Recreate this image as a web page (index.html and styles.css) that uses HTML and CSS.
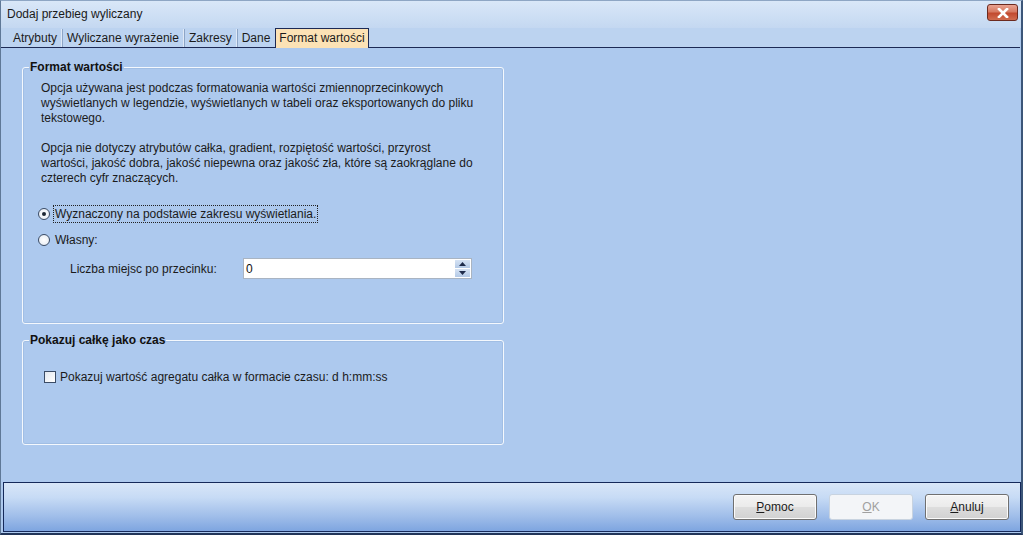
FILE: index.html
```html
<!DOCTYPE html>
<html lang="pl">
<head>
<meta charset="utf-8">
<title>Dodaj przebieg wyliczany</title>
<link rel="stylesheet" href="styles.css">
</head>
<body>
<div class="window">
  <div class="titlebar">
    <span class="title">Dodaj przebieg wyliczany</span>
    <button class="close" aria-label="Zamknij">
      <svg width="14" height="10" viewBox="0 0 14 10"><path d="M3 1 L11 9 M11 1 L3 9" stroke="#fff" stroke-width="2.6" stroke-linecap="square"/></svg>
    </button>
  </div>
  <div class="tabs">
    <span class="tab">Atrybuty</span>
    <span class="tab">Wyliczane wyrażenie</span>
    <span class="tab">Zakresy</span>
    <span class="tab">Dane</span>
    <span class="tab active">Format wartości</span>
  </div>
  <div class="content">
    <fieldset class="group g1">
      <legend>Format wartości</legend>
      <p class="desc">Opcja używana jest podczas formatowania wartości zmiennoprzecinkowych<br>wyświetlanych w legendzie, wyświetlanych w tabeli oraz eksportowanych do pliku<br>tekstowego.</p>
      <p class="desc">Opcja nie dotyczy atrybutów całka, gradient, rozpiętość wartości, przyrost<br>wartości, jakość dobra, jakość niepewna oraz jakość zła, które są zaokrąglane do<br>czterech cyfr znaczących.</p>
      <div class="radio-row r1"><span class="radio checked"></span><span class="label focus">Wyznaczony na podstawie zakresu wyświetlania.</span></div>
      <div class="radio-row r2"><span class="radio"></span><span class="label">Własny:</span></div>
      <div class="field-row">
        <span class="field-label">Liczba miejsc po przecinku:</span>
        <div class="spin">
          <span class="spin-value">0</span>
          <div class="spin-btns">
            <span class="sb"><svg width="7" height="4" viewBox="0 0 7 4"><path d="M0 4 L3.5 0 L7 4 Z" fill="#1e2b4a"/></svg></span>
            <span class="sb"><svg width="7" height="4" viewBox="0 0 7 4"><path d="M0 0 L3.5 4 L7 0 Z" fill="#1e2b4a"/></svg></span>
          </div>
        </div>
      </div>
    </fieldset>
    <fieldset class="group g2">
      <legend>Pokazuj całkę jako czas</legend>
      <div class="check-row"><span class="checkbox"></span><span class="label">Pokazuj wartość agregatu całka w formacie czasu: d h:mm:ss</span></div>
    </fieldset>
  </div>
  <div class="footer">
    <button class="btn"><u>P</u>omoc</button>
    <button class="btn disabled"><u>O</u>K</button>
    <button class="btn"><u>A</u>nuluj</button>
  </div>
</div>
</body>
</html>
```

FILE: styles.css
```css
* { box-sizing: border-box; }
html, body { margin: 0; padding: 0; }
body {
  width: 1023px;
  height: 535px;
  overflow: hidden;
  font-family: "Liberation Sans", Arial, sans-serif;
  font-size: 12px;
  color: #1b1b1b;
  background: #adc9ee;
}
.window {
  width: 1023px;
  height: 535px;
  display: flex;
  flex-direction: column;
  background: #adc9ee;
  border-left: 1px solid #5f7897;
  border-right: 2px solid #3c5679;
  border-bottom: 2px solid #22365a;
  border-top: 1px solid #8ea6c4;
}
.titlebar {
  height: 27px;
  flex: none;
  display: flex;
  align-items: center;
  justify-content: space-between;
  padding: 0 3px 0 6px;
  background: linear-gradient(#d9e7f8, #c4d8f1);
}
.title { font-size: 12px; color: #1a1a1a; margin-top: -1px; }
.close {
  width: 31px;
  height: 17px;
  margin-top: -4px;
  border: 1px solid #6c2a1f;
  border-radius: 3px;
  background: linear-gradient(#e9a392 0%, #d67a62 45%, #c24a2f 55%, #d06c4f 100%);
  display: flex;
  align-items: center;
  justify-content: center;
  padding: 0;
}
.tabs {
  height: 20px;
  flex: none;
  display: flex;
  align-items: flex-end;
  padding-left: 8px;
  background: #bcd3f0;
  border-bottom: 1px solid #1d2a55;
  margin-right: 1px;
}
.tab {
  height: 18px;
  line-height: 18px;
  padding: 0 4px 0 4px;
  color: #1b1b1b;
  border-right: 1px solid #dfe9f7;
  box-shadow: 1px 0 0 #8da5c6;
  margin-right: 1px;
}
.tab:nth-child(4) { border-right: none; box-shadow: none; }
.tab.active {
  height: 20px;
  line-height: 19px;
  background: #fce2b5;
  border: 1px solid #1d2a55;
  border-bottom: none;
  box-shadow: none;
  margin-bottom: -1px;
  padding: 0 3px;
  position: relative;
}
.content {
  flex: 1;
  padding: 13px 0 0 21px;
  display: flex;
  flex-direction: column;
}
.group {
  width: 482px;
  margin: 0;
  border: 1px solid #f4f8fd;
  border-radius: 3px;
  box-shadow: inset 0 0 0 1px rgba(140,170,210,0.35);
  padding: 0 0 0 18px;
  flex: none;
}
.group legend {
  font-weight: bold;
  font-size: 12px;
  color: #111;
  padding: 0 1px;
  margin-left: -12px;
  line-height: 13px;
}
.g1 { height: 263px; }
.g2 { height: 111px; margin-top: 10px; }
.desc {
  margin: 7px 0 0 0;
  line-height: 15px;
  color: #1b1b1b;
}
.desc + .desc { margin-top: 15px; }
.radio-row {
  display: flex;
  align-items: center;
  margin-left: -3px;
  height: 18px;
}
.r1 { margin-top: 19px; }
.r2 { margin-top: 8px; }
.radio {
  width: 12px;
  height: 12px;
  border-radius: 50%;
  border: 1px solid #3b4c66;
  background: radial-gradient(circle, #ffffff 0%, #eef2f7 60%, #d4dce8 100%);
  margin-right: 5px;
  position: relative;
  flex: none;
}
.radio.checked::after {
  content: "";
  position: absolute;
  left: 3px; top: 3px;
  width: 4px; height: 4px;
  border-radius: 50%;
  background: #1c2633;
}
.label.focus {
  outline: 1px dotted #222;
  padding: 1px 1px;
  margin-left: -1px;
}
.field-row {
  display: flex;
  align-items: center;
  margin-top: 9px;
  margin-left: 29px;
}
.field-label { width: 173px; color: #1b1b1b; }
.spin {
  width: 229px;
  height: 21px;
  background: #fff;
  border: 1px solid #a9b4c2;
  display: flex;
  align-items: center;
  justify-content: space-between;
  padding-left: 2px;
}
.spin-value { color: #111; }
.spin-btns {
  display: flex;
  flex-direction: column;
  gap: 1px;
  padding: 1px 1px 1px 0;
  height: 100%;
}
.sb {
  width: 15px;
  flex: 1;
  background: linear-gradient(#d6e3f4, #b3c9e6);
  display: flex;
  align-items: center;
  justify-content: center;
}
.check-row {
  display: flex;
  align-items: center;
  margin-top: 23px;
  margin-left: 3px;
}
.checkbox {
  width: 12px;
  height: 12px;
  border: 1px solid #3b4c66;
  background: linear-gradient(135deg, #e3e8ef, #ffffff);
  margin-right: 4px;
  flex: none;
}
.footer {
  height: 50px;
  flex: none;
  margin: 0 0 1px 2px;
  border: 1px solid #15295a;
  background: linear-gradient(#d8e6f8 0%, #c7dbf5 30%, #9fbde9 70%, #7ea5e0 100%);
  display: flex;
  justify-content: flex-end;
  align-items: center;
  gap: 12px;
  padding: 0 11px 0 0;
}
.btn {
  width: 84px;
  height: 26px;
  font-family: "Liberation Sans", Arial, sans-serif;
  font-size: 12px;
  color: #1b1b1b;
  border: 1px solid #707070;
  border-radius: 3px;
  background: linear-gradient(#f4f4f4 0%, #ebebeb 48%, #dddddd 52%, #d1d1d1 100%);
  box-shadow: inset 0 0 0 1px #fbfbfb;
  padding: 0;
}
.btn.disabled {
  color: #a0a0a0;
  border-color: #c8d3e0;
  background: #f3f5f8;
  box-shadow: none;
}
```
